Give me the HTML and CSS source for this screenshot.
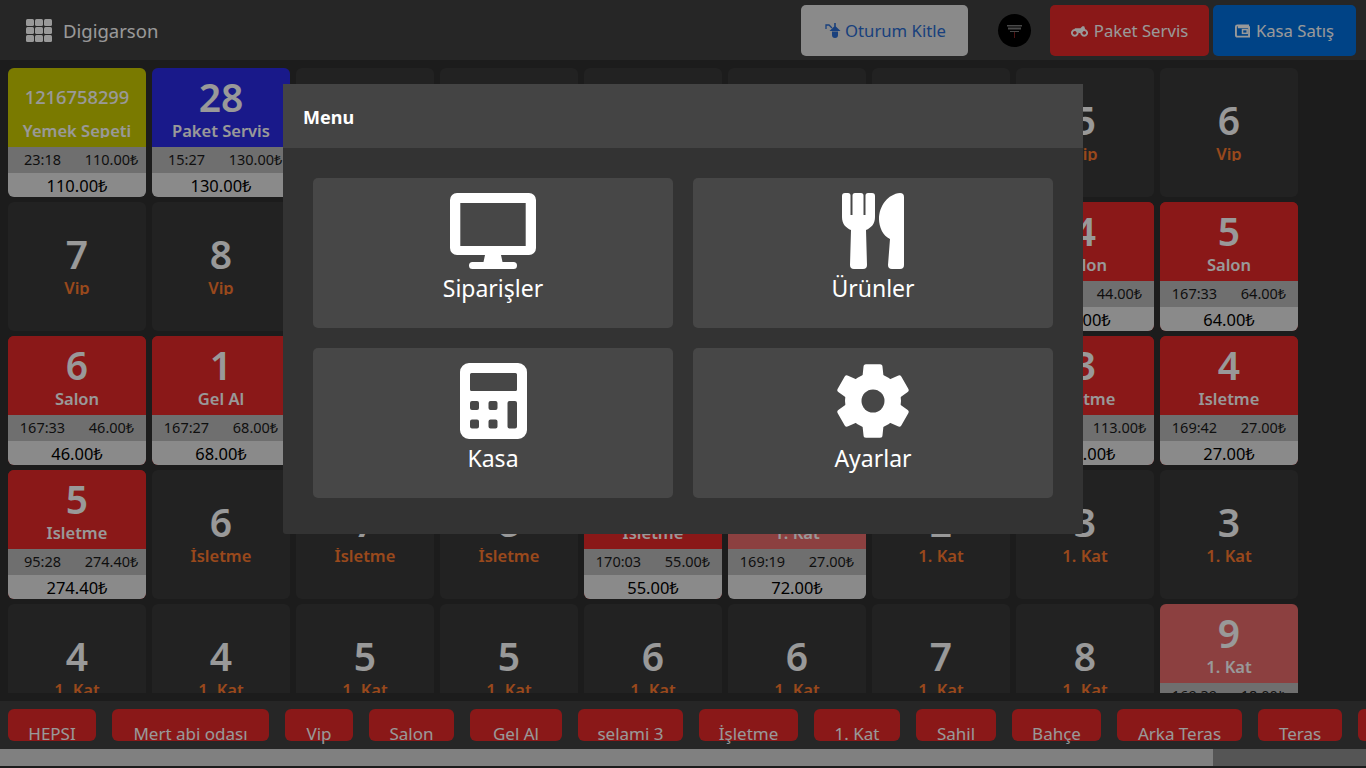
FILE: index.html
```html
<!DOCTYPE html>
<html lang="tr">
<head>
<meta charset="utf-8">
<title>Digigarson</title>
<link rel="stylesheet" href="styles.css">
</head>
<body>
<header class="topbar">
  <div class="brand">
    <svg class="brand-icon" viewBox="0 0 26 23"><g fill="currentColor"><rect x="0" y="0" width="8" height="7" rx="1.5"/><rect x="9" y="0" width="8" height="7" rx="1.5"/><rect x="18" y="0" width="8" height="7" rx="1.5"/><rect x="0" y="8" width="8" height="7" rx="1.5"/><rect x="9" y="8" width="8" height="7" rx="1.5"/><rect x="18" y="8" width="8" height="7" rx="1.5"/><rect x="0" y="16" width="8" height="7" rx="1.5"/><rect x="9" y="16" width="8" height="7" rx="1.5"/><rect x="18" y="16" width="8" height="7" rx="1.5"/></g></svg>
    <span>Digigarson</span>
  </div>
  <div class="actions">
    <button class="btn btn-light"><svg class="ico ico-lock" viewBox="0 0 16 15"><path fill="none" stroke="currentColor" stroke-width="1.3" d="M1 6V2h3l3 3"/><path fill="currentColor" d="M9.200 0h1.600v3.500L15.500 8h-11L9.200 3.500zM7 8.500h6V12a3 3 0 0 1-6 0z"/></svg>Oturum Kitle</button>
    <span class="avatar"><svg viewBox="0 0 33 33"><g fill="#7a7a7a"><rect x="9" y="11" width="15" height="1.5"/><rect x="10" y="13.500" width="13" height="2"/><rect x="12" y="17" width="9" height="1"/></g><rect x="16" y="18" width="1" height="6" fill="#802020"/></svg></span>
    <button class="btn btn-red"><svg class="ico ico-bike" viewBox="0 0 18 12"><path fill="none" stroke="currentColor" stroke-width="2" d="M4 5a3 3 0 1 0 .01 0zM14 5a3 3 0 1 0 .01 0z"/><path fill="currentColor" d="M4 3h6l2-2h2l1 3-4 4H8L6 5H4z"/></svg>Paket Servis</button>
    <button class="btn btn-blue"><svg class="ico" viewBox="0 0 16 16"><path fill="none" stroke="currentColor" stroke-width="2" d="M14 4V2H2.500A1.500 1.500 0 0 0 1 3.500v9A1.500 1.500 0 0 0 2.500 14H15V4H3"/><rect x="8" y="6.500" width="5" height="4" fill="none" stroke="currentColor" stroke-width="1.600"/></svg>Kasa Satış</button>
  </div>
</header>

<main class="grid-wrap">
  <div class="grid">
    <article class="tile olive"><div class="head"><div class="num small">1216758299</div><div class="lbl">Yemek Sepeti</div></div><div class="meta"><span>23:18</span><span>110.00₺</span></div><div class="total">110.00₺</div></article>
    <article class="tile blue"><div class="head"><div class="num">28</div><div class="lbl">Paket Servis</div></div><div class="meta"><span>15:27</span><span>130.00₺</span></div><div class="total">130.00₺</div></article>
    <article class="tile empty"><div class="head"><div class="num">1</div><div class="lbl">Vip</div></div></article>
    <article class="tile empty"><div class="head"><div class="num">2</div><div class="lbl">Vip</div></div></article>
    <article class="tile empty"><div class="head"><div class="num">3</div><div class="lbl">Vip</div></div></article>
    <article class="tile empty"><div class="head"><div class="num">4</div><div class="lbl">Vip</div></div></article>
    <article class="tile empty"><div class="head"><div class="num">4</div><div class="lbl">Vip</div></div></article>
    <article class="tile empty"><div class="head"><div class="num">5</div><div class="lbl">Vip</div></div></article>
    <article class="tile empty"><div class="head"><div class="num">6</div><div class="lbl">Vip</div></div></article>

    <article class="tile empty"><div class="head"><div class="num">7</div><div class="lbl">Vip</div></div></article>
    <article class="tile empty"><div class="head"><div class="num">8</div><div class="lbl">Vip</div></div></article>
    <article class="tile empty"><div class="head"><div class="num">1</div><div class="lbl">Salon</div></div></article>
    <article class="tile empty"><div class="head"><div class="num">2</div><div class="lbl">Salon</div></div></article>
    <article class="tile empty"><div class="head"><div class="num">3</div><div class="lbl">Salon</div></div></article>
    <article class="tile empty"><div class="head"><div class="num">3</div><div class="lbl">Salon</div></div></article>
    <article class="tile empty"><div class="head"><div class="num">4</div><div class="lbl">Salon</div></div></article>
    <article class="tile red"><div class="head"><div class="num">4</div><div class="lbl">Salon</div></div><div class="meta"><span>167:33</span><span>44.00₺</span></div><div class="total">44.00₺</div></article>
    <article class="tile red"><div class="head"><div class="num">5</div><div class="lbl">Salon</div></div><div class="meta"><span>167:33</span><span>64.00₺</span></div><div class="total">64.00₺</div></article>

    <article class="tile red"><div class="head"><div class="num">6</div><div class="lbl">Salon</div></div><div class="meta"><span>167:33</span><span>46.00₺</span></div><div class="total">46.00₺</div></article>
    <article class="tile red"><div class="head"><div class="num">1</div><div class="lbl">Gel Al</div></div><div class="meta"><span>167:27</span><span>68.00₺</span></div><div class="total">68.00₺</div></article>
    <article class="tile empty"><div class="head"><div class="num">1</div><div class="lbl">İsletme</div></div></article>
    <article class="tile empty"><div class="head"><div class="num">2</div><div class="lbl">İsletme</div></div></article>
    <article class="tile empty"><div class="head"><div class="num">2</div><div class="lbl">İsletme</div></div></article>
    <article class="tile empty"><div class="head"><div class="num">3</div><div class="lbl">İsletme</div></div></article>
    <article class="tile empty"><div class="head"><div class="num">3</div><div class="lbl">İsletme</div></div></article>
    <article class="tile red"><div class="head"><div class="num">3</div><div class="lbl">İsletme</div></div><div class="meta"><span>169:42</span><span>113.00₺</span></div><div class="total">113.00₺</div></article>
    <article class="tile red"><div class="head"><div class="num">4</div><div class="lbl">İsletme</div></div><div class="meta"><span>169:42</span><span>27.00₺</span></div><div class="total">27.00₺</div></article>

    <article class="tile red"><div class="head"><div class="num">5</div><div class="lbl">İsletme</div></div><div class="meta"><span>95:28</span><span>274.40₺</span></div><div class="total">274.40₺</div></article>
    <article class="tile empty"><div class="head"><div class="num">6</div><div class="lbl">İsletme</div></div></article>
    <article class="tile empty"><div class="head"><div class="num">7</div><div class="lbl">İsletme</div></div></article>
    <article class="tile empty"><div class="head"><div class="num">8</div><div class="lbl">İsletme</div></div></article>
    <article class="tile red"><div class="head"><div class="num">9</div><div class="lbl">İsletme</div></div><div class="meta"><span>170:03</span><span>55.00₺</span></div><div class="total">55.00₺</div></article>
    <article class="tile pale"><div class="head"><div class="num">1</div><div class="lbl">1. Kat</div></div><div class="meta"><span>169:19</span><span>27.00₺</span></div><div class="total">72.00₺</div></article>
    <article class="tile empty"><div class="head"><div class="num">2</div><div class="lbl">1. Kat</div></div></article>
    <article class="tile empty"><div class="head"><div class="num">3</div><div class="lbl">1. Kat</div></div></article>
    <article class="tile empty"><div class="head"><div class="num">3</div><div class="lbl">1. Kat</div></div></article>

    <article class="tile empty"><div class="head"><div class="num">4</div><div class="lbl">1. Kat</div></div></article>
    <article class="tile empty"><div class="head"><div class="num">4</div><div class="lbl">1. Kat</div></div></article>
    <article class="tile empty"><div class="head"><div class="num">5</div><div class="lbl">1. Kat</div></div></article>
    <article class="tile empty"><div class="head"><div class="num">5</div><div class="lbl">1. Kat</div></div></article>
    <article class="tile empty"><div class="head"><div class="num">6</div><div class="lbl">1. Kat</div></div></article>
    <article class="tile empty"><div class="head"><div class="num">6</div><div class="lbl">1. Kat</div></div></article>
    <article class="tile empty"><div class="head"><div class="num">7</div><div class="lbl">1. Kat</div></div></article>
    <article class="tile empty"><div class="head"><div class="num">8</div><div class="lbl">1. Kat</div></div></article>
    <article class="tile pale"><div class="head"><div class="num">9</div><div class="lbl">1. Kat</div></div><div class="meta"><span>169:39</span><span>18.00₺</span></div><div class="total">18.00₺</div></article>
  </div>
</main>

<nav class="filters">
  <div class="pills">
    <span class="pill">HEPSI</span><span class="pill">Mert abi odası</span><span class="pill">Vip</span><span class="pill">Salon</span><span class="pill">Gel Al</span><span class="pill">selami 3</span><span class="pill">İşletme</span><span class="pill">1. Kat</span><span class="pill">Sahil</span><span class="pill">Bahçe</span><span class="pill">Arka Teras</span><span class="pill">Teras</span><span class="pill">Kat</span>
  </div>
  <div class="scrollbar"><div class="thumb"></div></div>
</nav>

<div class="backdrop"></div>

<section class="modal">
  <h2 class="modal-title">Menu</h2>
  <div class="modal-body">
    <a class="menu-card">
      <svg class="menu-ico" viewBox="0 0 86 76"><path fill="#fff" fill-rule="evenodd" d="M7 0h72a7 7 0 0 1 7 7v48a7 7 0 0 1-7 7H51l1.500 7H63.500a3.500 3.500 0 0 1 0 7h-41a3.500 3.500 0 0 1 0-7H33.500l1.500-7H7a7 7 0 0 1-7-7V7a7 7 0 0 1 7-7zM10.300 10v43h65.400V10z"/></svg>
      <span>Siparişler</span>
    </a>
    <a class="menu-card">
      <svg class="menu-ico" viewBox="0 0 86 76"><path fill="#fff" d="M15 0h3a2.500 2.500 0 0 1 2.500 2.500V22h2V2.500A2.500 2.500 0 0 1 25 0h6a2.500 2.500 0 0 1 2.500 2.500V22h2V2.500A2.500 2.500 0 0 1 38 0h4a3 3 0 0 1 3 3v21c0 7-4 11-9 13l1 35a4 4 0 0 1-4 4h-9a4 4 0 0 1-4-4l1-35c-5-2-9-6-9-13V3a3 3 0 0 1 3-3zM70 0a4 4 0 0 1 4 4v68a4 4 0 0 1-4 4h-8a4 4 0 0 1-4-4l2-26c-7-3-11-12-11-20C49 13 58 1 70 0z"/></svg>
      <span>Ürünler</span>
    </a>
    <a class="menu-card">
      <svg class="menu-ico" viewBox="0 0 86 76"><path fill="#fff" fill-rule="evenodd" d="M19 0h49a9 9 0 0 1 9 9v58a9 9 0 0 1-9 9H19a9 9 0 0 1-9-9V9a9 9 0 0 1 9-9zM21.500 10a1.500 1.500 0 0 0-1.500 1.500v15a1.500 1.500 0 0 0 1.500 1.500h44a1.500 1.500 0 0 0 1.500-1.500v-15a1.500 1.500 0 0 0-1.500-1.500zM22 38a2 2 0 0 0-2 2v5a2 2 0 0 0 2 2h5a2 2 0 0 0 2-2v-5a2 2 0 0 0-2-2zM40.500 38a2 2 0 0 0-2 2v5a2 2 0 0 0 2 2h5a2 2 0 0 0 2-2v-5a2 2 0 0 0-2-2zM22 56.500a2 2 0 0 0-2 2v5a2 2 0 0 0 2 2h5a2 2 0 0 0 2-2v-5a2 2 0 0 0-2-2zM40.500 56.500a2 2 0 0 0-2 2v5a2 2 0 0 0 2 2h5a2 2 0 0 0 2-2v-5a2 2 0 0 0-2-2zM59.500 38a2 2 0 0 0-2 2v23.500a2 2 0 0 0 2 2h5.500a2 2 0 0 0 2-2V40a2 2 0 0 0-2-2z"/></svg>
      <span>Kasa</span>
    </a>
    <a class="menu-card">
      <svg class="menu-ico" viewBox="0 0 86 76"><g fill="#fff"><circle cx="43" cy="38" r="28"/><path id="tooth" d="M36 1.300h14a2.500 2.500 0 0 1 2.500 2.500L54 18H32l1.500-14.200A2.500 2.500 0 0 1 36 1.300z"/><use href="#tooth" transform="rotate(60 43 38)"/><use href="#tooth" transform="rotate(120 43 38)"/><use href="#tooth" transform="rotate(180 43 38)"/><use href="#tooth" transform="rotate(240 43 38)"/><use href="#tooth" transform="rotate(300 43 38)"/></g><circle cx="43" cy="38" r="11.500" fill="#474747"/></svg>
      <span>Ayarlar</span>
    </a>
  </div>
</section>
</body>
</html>
```

FILE: styles.css
```css
* { box-sizing: border-box; }
html, body { margin: 0; height: 100%; overflow: hidden; }
body {
  background: #2f2f2f;
  font-family: "Noto Sans", "Open Sans", "Liberation Sans", sans-serif;
  color: #fff;
  display: flex;
  flex-direction: column;
  height: 768px;
}

/* top bar */
.topbar {
  flex: 0 0 60px;
  background: #404040;
  display: flex;
  align-items: center;
  justify-content: space-between;
  padding: 0 10px 0 26px;
}
.brand { display: flex; align-items: center; gap: 11px; font-size: 18.5px; }
.brand-icon { width: 26px; height: 23px; color: #fff; }
.actions { display: flex; align-items: center; }
.btn {
  height: 51px;
  border: 0;
  border-radius: 5px;
  font: inherit;
  font-size: 16.7px;
  display: inline-flex;
  align-items: center;
  justify-content: center;
  gap: 6px;
  margin-top: 1px;
}
.btn-light { width: 167px; background: #e6e6e6; color: #2a6bd0; }
.btn-red { width: 159px; background: #e62828; color: #fff; }
.btn-blue { width: 143px; background: #0070e0; color: #fff; margin-left: 4px; }
.ico { width: 15px; height: 16px; flex: none; }
.ico-lock { width: 16px; height: 15px; margin: 0 -2px 0 2px; }
.ico-bike { width: 17px; height: 12px; }
.avatar {
  width: 33px; height: 33px;
  margin: 1px 19px 0 30px;
  border-radius: 50%;
  background: #000;
  display: block;
  overflow: hidden;
}
.avatar svg { display: block; width: 33px; height: 33px; }

/* grid */
.grid-wrap {
  flex: 0 0 633px;
  overflow: hidden;
  padding: 8px 0 0 8px;
}
.grid {
  display: grid;
  grid-template-columns: repeat(9, 138px);
  grid-auto-rows: 129px;
  column-gap: 6px;
  row-gap: 5px;
}
.tile {
  border-radius: 6px;
  overflow: hidden;
  display: flex;
  flex-direction: column;
  background: #393939;
  text-align: center;
}
.head { height: 79px; padding-top: 6px; flex: none; }
.empty .head { padding-top: 29px; }
.num { font-size: 39px; font-weight: 600; line-height: 46px; height: 46px; }
.num.small { font-size: 18.3px; font-weight: 500; }
.lbl {
  font-size: 16.5px;
  font-weight: 600;
  height: 13px;
  line-height: 11px;
  overflow: hidden;
  margin-top: 5px;
}
.empty .lbl { color: #ff7b2f; height: 15px; line-height: 15px; margin-top: 3px; }
.red { background: #e62828; }
.olive .head { background: #cccc00; }
.blue .head { background: #2b2be6; }
.pale .head { background: #e96b6b; }
.red .head { background: #e62828; }
.meta {
  height: 26px;
  flex: none;
  background: #b9b9b9;
  color: #1a1a1a;
  display: grid;
  grid-template-columns: 1fr 1fr;
  line-height: 24px;
  font-size: 14.5px;
}
.total {
  height: 24px;
  flex: none;
  background: #e6e6e6;
  color: #000;
  font-size: 16.5px;
  line-height: 26px;
}

/* filter bar */
.filters {
  margin-top: 8px;
  flex: 0 0 65px;
  background: #404040;
  overflow: hidden;
}
.pills {
  height: 48px;
  padding: 8px 0 0 8px;
  display: flex;
  gap: 16px;
  white-space: nowrap;
  overflow: hidden;
}
.pill {
  flex: none;
  height: 32px;
  padding-top: 15px;
  line-height: 20px;
  font-size: 17px;
  text-align: center;
  background: #e62828;
  border-radius: 6px;
}
.pill:nth-child(1) { width: 88px; }
.pill:nth-child(2) { width: 157px; }
.pill:nth-child(3) { width: 68px; }
.pill:nth-child(4) { width: 85px; }
.pill:nth-child(5) { width: 92px; }
.pill:nth-child(6) { width: 105px; }
.pill:nth-child(7) { width: 99px; }
.pill:nth-child(8) { width: 86px; }
.pill:nth-child(9) { width: 80px; }
.pill:nth-child(10) { width: 89px; }
.pill:nth-child(11) { width: 125px; }
.pill:nth-child(12) { width: 84px; }
.pill:nth-child(13) { width: 80px; }
.scrollbar { height: 17px; background: #8e8e8e; }
.thumb { width: 1213px; height: 17px; background: #d6d6d6; }

/* modal */
.backdrop { position: fixed; inset: 0; background: rgba(0, 0, 0, .4); }
.modal {
  position: fixed;
  left: 283px;
  top: 84px;
  width: 800px;
  height: 450px;
  background: #333;
  border-radius: 3px;
}
.modal-title {
  margin: 0;
  height: 64px;
  background: #444;
  padding: 0 20px;
  font-size: 18px;
  font-weight: 700;
  line-height: 66px;
}
.modal-body {
  padding: 30px;
  display: grid;
  grid-template-columns: 360px 360px;
  grid-auto-rows: 150px;
  gap: 20px;
}
.menu-card {
  background: #474747;
  border-radius: 5px;
  display: flex;
  flex-direction: column;
  align-items: center;
  padding-top: 15px;
  font-size: 23px;
  line-height: 38px;
}
.menu-ico { width: 86px; height: 76px; display: block; }
```
